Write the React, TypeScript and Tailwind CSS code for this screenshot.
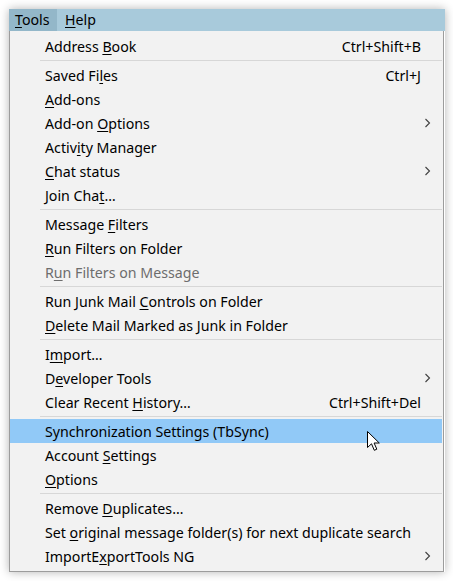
import React from 'react';

type Item =
  | { sep: true }
  | {
      sep?: false;
      label: string;
      key?: number; // index of underlined access key
      shortcut?: string;
      submenu?: boolean;
      disabled?: boolean;
      active?: boolean;
    };

const items: Item[] = [
  { label: 'Address Book', key: 8, shortcut: 'Ctrl+Shift+B' },
  { sep: true },
  { label: 'Saved Files', key: 8, shortcut: 'Ctrl+J' },
  { label: 'Add-ons', key: 0 },
  { label: 'Add-on Options', key: 7, submenu: true },
  { label: 'Activity Manager', key: 5 },
  { label: 'Chat status', key: 0, submenu: true },
  { label: 'Join Chat…', key: 8 },
  { sep: true },
  { label: 'Message Filters', key: 8 },
  { label: 'Run Filters on Folder', key: 0 },
  { label: 'Run Filters on Message', key: 1, disabled: true },
  { sep: true },
  { label: 'Run Junk Mail Controls on Folder', key: 14 },
  { label: 'Delete Mail Marked as Junk in Folder', key: 0 },
  { sep: true },
  { label: 'Import…', key: 1 },
  { label: 'Developer Tools', key: 1, submenu: true },
  { label: 'Clear Recent History…', key: 13, shortcut: 'Ctrl+Shift+Del' },
  { sep: true },
  { label: 'Synchronization Settings (TbSync)', active: true },
  { label: 'Account Settings', key: 8 },
  { label: 'Options', key: 0 },
  { sep: true },
  { label: 'Remove Duplicates…', key: 7 },
  { label: 'Set original message folder(s) for next duplicate search', key: 4 },
  { label: 'ImportExportTools NG', key: 7, submenu: true },
];

function Label({ text, k }: { text: string; k?: number }) {
  if (k === undefined) return <span>{text}</span>;
  return (
    <span>
      {text.slice(0, k)}
      <span className="underline underline-offset-[2px] decoration-1">{text[k]}</span>
      {text.slice(k + 1)}
    </span>
  );
}

function Chevron() {
  return (
    <svg width="7" height="10" viewBox="0 0 7 10" className="block">
      <path d="M1.5 1 L5.5 5 L1.5 9" fill="none" stroke="#404040" strokeWidth="1.1" />
    </svg>
  );
}

function Cursor() {
  return (
    <svg
      width="14"
      height="21"
      viewBox="0 0 14 21"
      className="absolute left-[357px] top-[12px] z-10 pointer-events-none"
    >
      <path
        d="M0.5 0.5 L0.5 16.5 L4.5 12.8 L7.3 19.3 L9.8 18.2 L7.1 12 L12.3 12 Z"
        fill="#ffffff"
        stroke="#000000"
        strokeWidth="1"
        strokeLinejoin="round"
      />
    </svg>
  );
}

export default function App() {
  return (
    <div
      className="w-[453px] h-[581px] bg-white pl-[9px] pt-[9px] overflow-hidden"
      style={{ fontFamily: '"Noto Sans", "Open Sans", sans-serif' }}
    >
      <div className="w-[436px] shadow-[0_0_9px_rgba(0,0,0,0.3)]">
        {/* Menu bar */}
        <div className="h-[22px] bg-[#a8cadb] flex items-stretch text-[14.2px] text-black">
          <div className="w-[48px] bg-[#93b7c9] flex items-center pl-[6px]">
            <Label text="Tools" k={0} />
          </div>
          <div className="flex items-center pl-[8px]">
            <Label text="Help" k={0} />
          </div>
        </div>

        {/* Popup */}
        <div className="w-[435px] bg-[#f2f2f2] border-l border-b border-r border-[#9c9c9c] pt-[3px] pb-[3px] pr-[1px] text-[14.2px]">
          {items.map((it, i) =>
            it.sep ? (
              <div key={i} className="h-[5px] flex items-center pl-[30px]">
                <div className="h-px w-full bg-[#d7d7d7]" />
              </div>
            ) : (
              <div
                key={i}
                className={`relative h-[24px] flex items-center pl-[35px] ${
                  it.active ? 'bg-[#91c9f7]' : ''
                } ${it.disabled ? 'text-[#6d6d6d]' : 'text-black'}`}
              >
                <span className="flex-1 whitespace-nowrap pt-[1px]">
                  <Label text={it.label} k={it.key} />
                </span>
                {it.shortcut && <span className="whitespace-nowrap pt-[1px]">{it.shortcut}</span>}
                <span className="w-[21px] flex justify-end pr-[11px]">{it.submenu && <Chevron />}</span>
                {it.active && <Cursor />}
              </div>
            )
          )}
        </div>
      </div>
    </div>
  );
}
